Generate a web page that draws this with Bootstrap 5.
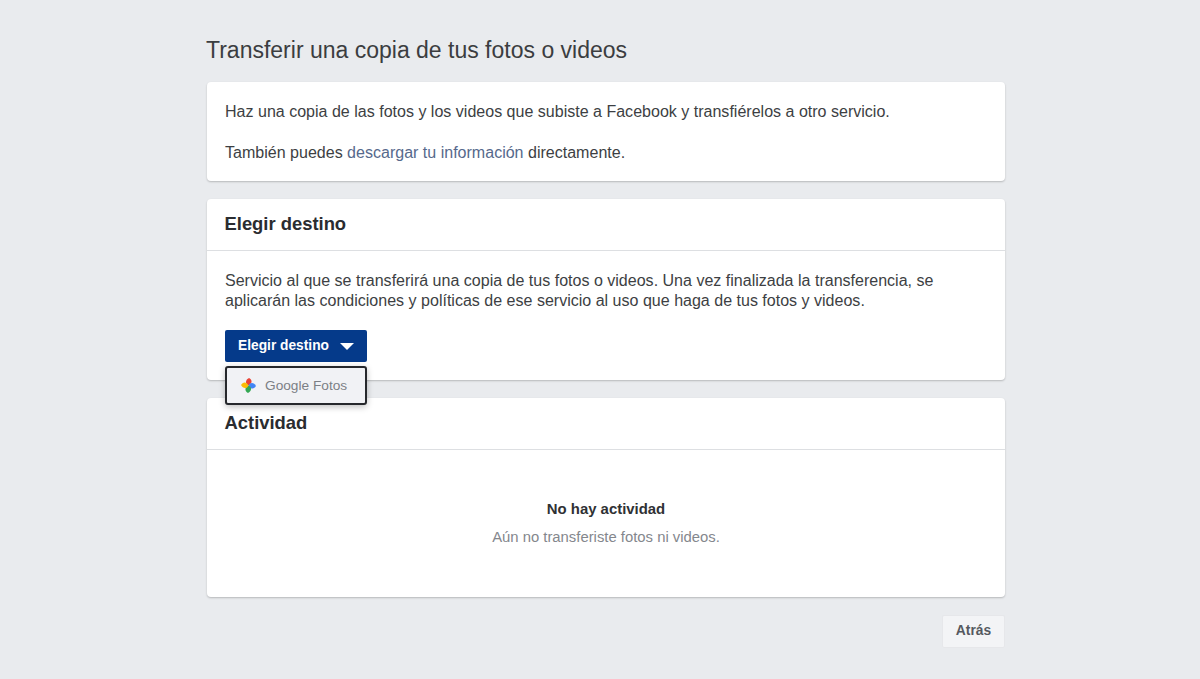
<!DOCTYPE html>
<html>
<head>
<meta charset="utf-8">
<title>Transferir una copia</title>
<link href="https://cdn.jsdelivr.net/npm/bootstrap@5.3.0/dist/css/bootstrap.min.css" rel="stylesheet">
<style>
  body { background: #e9ebee; font-family: "Liberation Sans", Arial, sans-serif; color: #1c1e21; font-size: 16.05px; }
  .page-wrap { width: 798px; margin-left: 207px; padding-top: 37px; }
  .page-title { font-size: 23px; font-weight: 400; line-height: 26px; margin: 0 0 19px -1px; color: #3b3d40; }
  .fb-card { border: 0; border-radius: 4px; box-shadow: 0 1px 2px rgba(0,0,0,.22); margin-bottom: 18px; background: #fff; }
  .fb-intro { height: 99px; padding: 19px 18px 0; line-height: 20px; color: #3d3f43; }
  .fb-intro p { margin: 0 0 21px; }
  .fb-intro a { color: #56698c; text-decoration: none; }
  .fb-head { height: 52px; padding: 0 18px 2px 17.5px; display: flex; align-items: center; font-size: 18.4px; font-weight: 700; border-bottom: 1px solid #dddfe2; color: #2a2c30; }
  .fb-dest { height: 181px; }
  .fb-dest-body { padding: 19px 18px 0; line-height: 20px; color: #3d3f43; }
  .fb-dest-body p { margin: 0 0 20px; }
  .dest-btn { background: #053a8a; color: #fff; border: 0; border-radius: 2px; width: 142px; height: 32px; padding: 0; font-size: 13.75px; font-weight: 700; display: flex; align-items: center; justify-content: center; gap: 11px; }
  .dest-btn:hover, .dest-btn:active { background: #053a8a !important; color: #fff !important; }
  .caret-down { width: 0; height: 0; border-left: 7px solid transparent; border-right: 7px solid transparent; border-top: 7px solid #fff; }
  .dest-menu { position: absolute; left: 0; top: 36px; width: 142px; height: 39px; background: #f1f2f5; border: 2px solid #26282c; border-radius: 3px; box-shadow: 0 2px 6px rgba(0,0,0,.25); display: flex; align-items: center; gap: 8px; padding-left: 13px; font-size: 13.7px; color: #7c7f85; z-index: 5; }
  .fb-act { height: 199px; }
  .empty-act { height: 147px; padding-top: 50px; text-align: center; }
  .empty-title { font-size: 14.9px; font-weight: 700; line-height: 18px; margin-bottom: 10px; color: #2f3134; }
  .empty-sub { font-size: 14.85px; line-height: 18px; color: #84878d; }
  .back-btn { width: 63px; height: 33px; padding: 0; background: #f3f4f6; border: 1px solid #e6e7ea; border-radius: 2px; font-size: 13.8px; font-weight: 700; color: #555960; }
</style>
</head>
<body>
<div class="page-wrap">
  <h1 class="page-title">Transferir una copia de tus fotos o videos</h1>

  <div class="card fb-card fb-intro">
    <p>Haz una copia de las fotos y los videos que subiste a Facebook y transfiérelos a otro servicio.</p>
    <p>También puedes <a href="#">descargar tu información</a> directamente.</p>
  </div>

  <div class="card fb-card fb-dest">
    <div class="fb-head">Elegir destino</div>
    <div class="fb-dest-body">
      <p>Servicio al que se transferirá una copia de tus fotos o videos. Una vez finalizada la transferencia, se aplicarán las condiciones y políticas de ese servicio al uso que haga de tus fotos y videos.</p>
      <div class="position-relative">
        <button type="button" class="btn dest-btn">Elegir destino <span class="caret-down"></span></button>
        <div class="dest-menu">
          <svg width="17" height="17" viewBox="0 0 16 16">
            <path d="M8 8C4.500 6.500 5 2.500 8.500 1C11.500 2.500 12 6 8 8z" fill="#ea4335"/>
            <path d="M8 8C9.500 4.500 13.500 5 15 8.500C13.500 11.500 10 12 8 8z" fill="#4285f4"/>
            <path d="M8 8C11.500 9.500 11 13.500 7.500 15C4.500 13.500 4 10 8 8z" fill="#34a853"/>
            <path d="M8 8C6.500 11.500 2.500 11 1 7.500C2.500 4.500 6 4 8 8z" fill="#fbbc05"/>
          </svg>
          <span>Google Fotos</span>
        </div>
      </div>
    </div>
  </div>

  <div class="card fb-card fb-act">
    <div class="fb-head">Actividad</div>
    <div class="empty-act">
      <div class="empty-title">No hay actividad</div>
      <div class="empty-sub">Aún no transferiste fotos ni videos.</div>
    </div>
  </div>

  <div class="d-flex justify-content-end">
    <button type="button" class="btn back-btn">Atrás</button>
  </div>
</div>
<script src="https://cdn.jsdelivr.net/npm/bootstrap@5.3.0/dist/js/bootstrap.bundle.min.js"></script>
</body>
</html>
